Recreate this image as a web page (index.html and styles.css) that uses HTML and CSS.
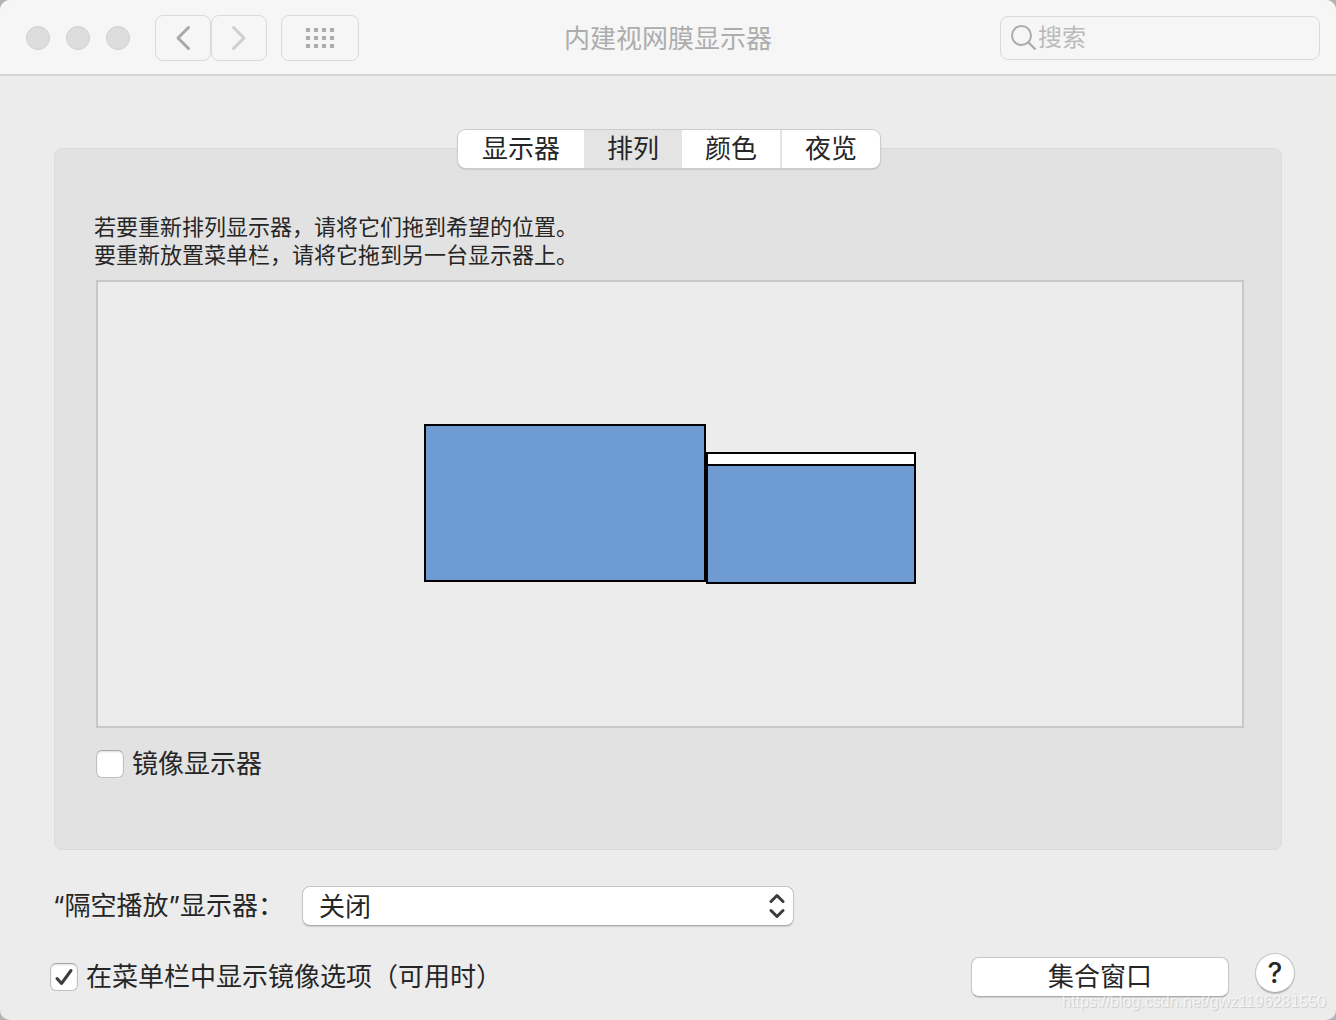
FILE: index.html
```
<!DOCTYPE html>
<html lang="zh-CN">
<head>
    <meta charset="UTF-8">
    <meta name="viewport" content="width=device-width, initial-scale=1.0">
    <title>内建视网膜显示器</title>
    <link rel="stylesheet" href="styles.css">
</head>
<body>
    <div class="window">
        <header class="toolbar">
            <div class="toolbar-left">
                <div class="lights">
                    <button class="light" aria-label="关闭窗口"></button>
                    <button class="light" aria-label="最小化"></button>
                    <button class="light" aria-label="缩放"></button>
                </div>
                <div class="nav">
                    <button class="tool-button" aria-label="后退">
                        <svg width="16" height="26" viewBox="0 0 16 26"><path d="M13.5 2.5 L3 13 L13.5 23.5" fill="none" stroke="#a9a9a9" stroke-width="3" stroke-linecap="round" stroke-linejoin="round"/></svg>
                    </button>
                    <button class="tool-button" aria-label="前进" disabled>
                        <svg width="16" height="26" viewBox="0 0 16 26"><path d="M2.5 2.5 L13 13 L2.5 23.5" fill="none" stroke="#cfcfcf" stroke-width="3" stroke-linecap="round" stroke-linejoin="round"/></svg>
                    </button>
                </div>
                <button class="tool-button grid-button" aria-label="显示全部">
                    <svg width="28" height="20" viewBox="0 0 28 20"><path d="M0 0h4v4h-4z M8 0h4v4h-4z M16 0h4v4h-4z M24 0h4v4h-4z M0 8h4v4h-4z M8 8h4v4h-4z M16 8h4v4h-4z M24 8h4v4h-4z M0 16h4v4h-4z M8 16h4v4h-4z M16 16h4v4h-4z M24 16h4v4h-4z" fill="#adadad"/></svg>
                </button>
            </div>
            <h1 class="title">内建视网膜显示器</h1>
            <label class="search">
                <svg width="26" height="26" viewBox="0 0 26 26"><circle cx="10.5" cy="10.5" r="9.5" fill="none" stroke="#adadad" stroke-width="2"/><path d="M17.5 17.5 L24.5 24.5" stroke="#adadad" stroke-width="2.4"/></svg>
                <input type="search" placeholder="搜索" aria-label="搜索">
            </label>
        </header>

        <main class="content">
            <section class="panel">
                <div class="tabs" role="tablist">
                    <button class="tab tab-wide" role="tab">显示器</button>
                    <button class="tab active" role="tab" aria-selected="true">排列</button>
                    <button class="tab" role="tab">颜色</button>
                    <button class="tab divided" role="tab">夜览</button>
                </div>
                <p class="hint">若要重新排列显示器，请将它们拖到希望的位置。<br>要重新放置菜单栏，请将它拖到另一台显示器上。</p>
                <div class="arrangement">
                    <div class="display external"></div>
                    <div class="display builtin"><div class="menubar"></div></div>
                </div>
                <label class="check">
                    <span class="box">
                        <input type="checkbox">
                        <svg width="28" height="28" viewBox="0 0 28 28"><path d="M7 15.5 L11.5 20.5 L21 7.5"/></svg>
                    </span>
                    镜像显示器
                </label>
            </section>

            <div class="airplay">
                <label for="airplay">“隔空播放”显示器：</label>
                <div class="select">
                    <select id="airplay">
                        <option>关闭</option>
                    </select>
                    <svg width="16" height="26" viewBox="0 0 16 26"><path d="M2 8.5 L8 2.5 L14 8.5 M2 17.5 L8 23.5 L14 17.5" fill="none" stroke="#3c3c3c" stroke-width="3" stroke-linecap="round" stroke-linejoin="round"/></svg>
                </div>
            </div>

            <footer class="bottom">
                <label class="check">
                    <span class="box">
                        <input type="checkbox" checked>
                        <svg width="28" height="28" viewBox="0 0 28 28"><path d="M7 15.5 L11.5 20.5 L21 7.5"/></svg>
                    </span>
                    在菜单栏中显示镜像选项（可用时）
                </label>
                <div class="actions">
                    <button class="gather">集合窗口</button>
                    <button class="help" aria-label="帮助">?</button>
                </div>
            </footer>
        </main>
        <div class="watermark">https://blog.csdn.net/gwz1196281550</div>
    </div>
</body>
</html>
```
FILE: styles.css
```
* {
    box-sizing: border-box;
}

body {
    margin: 0;
    background-color: #b4b4b4;
    color: #262626;
    font-family: Inter, "Noto Sans CJK SC", sans-serif;
    font-size: 26px;
    line-height: 40px;
}

button, input, select {
    margin: 0;
    padding: 0;
    font: inherit;
    color: inherit;
}

svg {
    display: block;
}

.window {
    position: relative;
    display: flex;
    flex-direction: column;
    min-height: 100vh;
    background-color: #ececec;
    border-radius: 10px;
    overflow: hidden;
}

/* toolbar */
.toolbar {
    display: grid;
    grid-template-columns: 1fr auto 1fr;
    align-items: center;
    height: 76px;
    padding: 2px 16px 0;
    background-color: #f6f6f6;
    border-bottom: 2px solid #d6d6d6;
}

.toolbar-left {
    display: flex;
    align-items: center;
    padding-left: 10px;
}

.lights {
    display: flex;
    gap: 16px;
    margin-right: 25px;
}

.light {
    width: 24px;
    height: 24px;
    background-color: #dddddd;
    border: 1px solid #d0d0d0;
    border-radius: 50%;
}

.nav {
    display: flex;
    margin-right: 14px;
}

.tool-button {
    display: flex;
    align-items: center;
    justify-content: center;
    width: 56px;
    height: 46px;
    background-color: #f6f6f6;
    border: 1px solid #dadada;
    border-radius: 8px;
}

.grid-button {
    width: 78px;
}

.title {
    margin: 0;
    padding-top: 2px;
    font-size: 26px;
    font-weight: 400;
    color: #adadad;
}

.search {
    display: flex;
    align-items: center;
    justify-self: end;
    gap: 1px;
    width: 320px;
    height: 44px;
    padding: 0 10px;
    border: 1px solid #dadada;
    border-radius: 8px;
}

.search input {
    flex: 1;
    min-width: 0;
    height: 40px;
    font-size: 24px;
    background: none;
    border: none;
    outline: none;
}

.search input::placeholder {
    color: #bbbbbb;
}

/* content */
.content {
    display: flex;
    flex: 1;
    flex-direction: column;
    padding: 72px 41px 23px 50px;
}

.panel {
    display: flex;
    flex: 1;
    flex-direction: column;
    margin: 0 13px 36px 4px;
    padding: 0 36px 65px 38px;
    background-color: #e2e2e2;
    border: 1px solid #dadada;
    border-radius: 8px;
}

.tabs {
    display: flex;
    align-self: center;
    margin-top: -19px;
    background-color: #ffffff;
    border-radius: 8px;
    box-shadow: 0 0 0 1px #cccccc, 0 1px 2px #999999;
    overflow: hidden;
}

.tab {
    width: 98px;
    height: 38px;
    line-height: 38px;
    background: none;
    border: none;
}

.tab-wide {
    width: 126px;
}

.tab.active {
    background-color: #e4e4e4;
}

.tab.divided {
    width: 100px;
    border-left: 2px solid #e4e4e4;
}

.hint {
    margin: 45px 0 11px 1px;
    font-size: 22px;
    line-height: 28px;
}

.arrangement {
    display: flex;
    flex: 1;
    align-items: center;
    justify-content: center;
    min-height: 300px;
    margin: 0 1px 16px 3px;
    background-color: #ececec;
    border: 2px solid #c8c8c8;
}

.display {
    background-color: #6e9bd1;
    border: 2px solid #000000;
}

.external {
    width: 282px;
    height: 158px;
    margin-bottom: 2px;
}

.builtin {
    width: 210px;
    height: 132px;
    margin-top: 28px;
}

.menubar {
    height: 12px;
    background-color: #ffffff;
    border-bottom: 2px solid #000000;
}

/* checkboxes */
.check {
    display: flex;
    align-items: center;
    align-self: flex-start;
    gap: 8px;
}

.panel .check {
    margin-left: 3px;
}

.box {
    position: relative;
    width: 28px;
    height: 28px;
}

.box input {
    display: block;
    width: 28px;
    height: 28px;
    appearance: none;
    background-color: #ffffff;
    border: 1px solid #c0c0c0;
    border-top-color: #a8a8a8;
    border-radius: 6px;
    box-shadow: inset 0 1px 2px #dddddd;
}

.box svg {
    position: absolute;
    top: 0;
    left: 0;
    visibility: hidden;
    fill: none;
    stroke: #3c3c3c;
    stroke-width: 3;
    stroke-linecap: round;
    stroke-linejoin: round;
    pointer-events: none;
}

.box input:checked + svg {
    visibility: visible;
}

/* airplay */
.airplay {
    display: flex;
    align-items: center;
    gap: 18px;
    margin: 0 0 27px 3px;
}

.select {
    position: relative;
    width: 492px;
}

.select select {
    display: block;
    width: 100%;
    height: 40px;
    padding: 0 16px;
    appearance: none;
    background-color: #ffffff;
    border: 1px solid #c6c6c6;
    border-bottom-color: #ababab;
    border-radius: 8px;
    box-shadow: 0 1px 1px #d0d0d0;
}

.select svg {
    position: absolute;
    top: 7px;
    right: 9px;
    pointer-events: none;
}

/* bottom row */
.bottom {
    display: flex;
    align-items: flex-end;
    justify-content: space-between;
}

.actions {
    display: flex;
    gap: 26px;
}

.bottom .check {
    align-self: flex-end;
}

.gather {
    width: 258px;
    height: 40px;
    margin-top: 4px;
    line-height: 38px;
    background-color: #ffffff;
    border: 1px solid #c6c6c6;
    border-bottom-color: #ababab;
    border-radius: 8px;
    box-shadow: 0 1px 1px #d0d0d0;
}

.help {
    width: 40px;
    height: 40px;
    font-size: 28px;
    font-weight: 500;
    line-height: 38px;
    background-color: #ffffff;
    border: 1px solid #c6c6c6;
    border-bottom-color: #ababab;
    border-radius: 50%;
    box-shadow: 0 1px 1px #c4c4c4;
}

.watermark {
    position: absolute;
    right: 10px;
    bottom: 8px;
    font-family: "Liberation Sans", Arial, sans-serif;
    font-size: 16px;
    line-height: 20px;
    color: rgba(255, 255, 255, 0.7);
    text-shadow: 1px 1px 1px rgba(0, 0, 0, 0.15);
    pointer-events: none;
}
```
